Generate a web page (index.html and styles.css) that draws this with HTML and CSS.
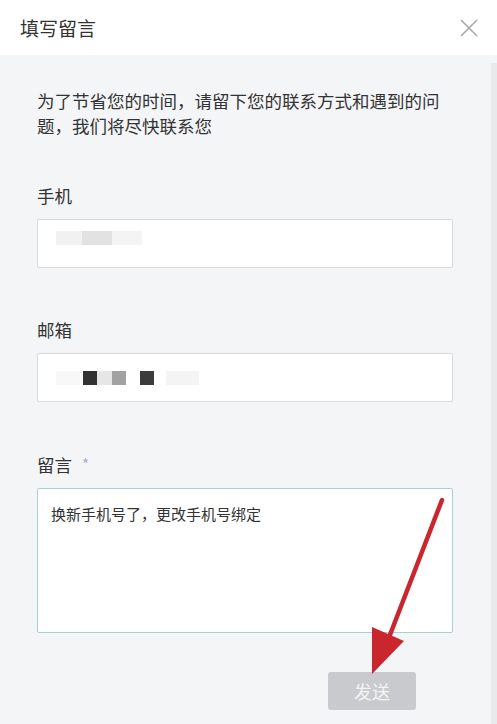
FILE: index.html
```html
<!DOCTYPE html>
<html lang="zh-CN">
<head>
<meta charset="utf-8">
<title>填写留言</title>
<link rel="stylesheet" href="styles.css">
</head>
<body>
<div class="page">
  <header class="header">
    <h1 class="title">填写留言</h1>
    <button class="close" aria-label="关闭">
      <svg width="18" height="18" viewBox="0 0 18 18"><path d="M1 1 L17 17 M17 1 L1 17" stroke="#a8a8a8" stroke-width="1.6" fill="none"/></svg>
    </button>
  </header>
  <div class="main">
    <div class="content">
      <p class="intro">为了节省您的时间，请留下您的联系方式和遇到的问题，我们将尽快联系您</p>
      <div class="field">
        <div class="label">手机</div>
        <div class="input input-phone">
          <span class="blk b-f0 w26"></span><span class="blk b-e0 w30"></span><span class="blk b-f4 w30"></span>
        </div>
      </div>
      <div class="field">
        <div class="label">邮箱</div>
        <div class="input input-mail">
          <span class="blk b-f6 w27"></span><span class="blk b-33 w14"></span><span class="blk b-e6 w15"></span><span class="blk b-a0 w14"></span><span class="blk b-fff w14"></span><span class="blk b-3a w14"></span><span class="blk b-fff w12"></span><span class="blk b-f4 w33"></span>
        </div>
      </div>
      <div class="field">
        <div class="label">留言 <span class="req">*</span></div>
        <div class="textarea">换新手机号了，更改手机号绑定</div>
      </div>
      <div class="actions">
        <button class="send">发送</button>
      </div>
    </div>
    <div class="scroll"></div>
  </div>
  <svg class="arrow" width="497" height="724" viewBox="0 0 497 724">
    <line x1="442" y1="500" x2="388" y2="640" stroke="#c9262d" stroke-width="4.5" stroke-linecap="round"/>
    <polygon points="372,627 404,641 372,674" fill="#c9262d"/>
  </svg>
</div>
</body>
</html>
```

FILE: styles.css
```css
* { box-sizing: border-box; }
html, body {
  margin: 0;
  padding: 0;
}
body {
  background: #f4f5f7;
  font-family: "Noto Sans CJK SC", "Noto Sans", sans-serif;
  color: #333;
}
.page {
  position: relative;
  width: 497px;
  height: 724px;
  overflow: hidden;
  display: flex;
  flex-direction: column;
}
.header {
  height: 55px;
  background: #fff;
  display: flex;
  align-items: center;
  justify-content: space-between;
  padding: 0 19px 0 20px;
  flex-shrink: 0;
}
.title {
  margin: 0;
  font-size: 19px;
  font-weight: 400;
  color: #333;
  line-height: 1;
}
.close {
  border: 0;
  background: transparent;
  padding: 0;
  width: 18px;
  height: 18px;
  display: flex;
}
.main {
  flex: 1;
  display: flex;
}
.content {
  flex: 1;
  padding: 33px 38px 0 37px;
}
.scroll {
  width: 6px;
  margin-top: 8px;
  background: #e9eaec;
}
.intro {
  margin: 0;
  font-size: 17.5px;
  line-height: 25px;
  color: #333;
}
.field {
  display: flex;
  flex-direction: column;
}
.label {
  font-size: 17.5px;
  line-height: 25px;
  color: #333;
  margin-bottom: 11px;
}
.field:nth-of-type(1) .label { margin-top: 45px; }
.field + .field .label { margin-top: 49px; }
.req {
  color: #9fb2c4;
  font-size: 15px;
  margin-left: 6px;
  vertical-align: 2px;
}
.input {
  height: 49px;
  background: #fff;
  border: 1px solid #dadbdd;
  border-radius: 2px;
  box-shadow: 0 0 1px rgba(0,0,0,0.06);
  display: flex;
  align-items: center;
  padding-left: 18px;
}
.input-phone { align-items: flex-start; padding-top: 11px; }
.blk {
  height: 14px;
  display: block;
}
.w12 { width: 12px; }
.w14 { width: 14px; }
.w15 { width: 15px; }
.w26 { width: 26px; }
.w27 { width: 27px; }
.w30 { width: 30px; }
.w33 { width: 33px; }
.b-f0 { background: #f1f1f1; }
.b-e0 { background: #e2e2e2; }
.b-f4 { background: #f4f4f4; }
.b-f6 { background: #f8f8f8; }
.b-33 { background: #323232; }
.b-e6 { background: #e6e6e6; }
.b-a0 { background: #a2a2a2; }
.b-fff { background: #fff; }
.b-3a { background: #3c3c3c; }
.textarea {
  height: 145px;
  background: #fff;
  border: 1px solid #a9cfd5;
  border-radius: 2px;
  padding: 13px 13px;
  font-size: 15px;
  line-height: 24px;
  color: #333;
}
.actions {
  display: flex;
  justify-content: flex-end;
  padding-right: 37px;
  margin-top: 39px;
}
.send {
  width: 88px;
  height: 38px;
  border: 0;
  border-radius: 3px;
  background: #c9cacd;
  color: #f4f4f5;
  font-family: "Noto Sans CJK SC", "Noto Sans", sans-serif;
  font-size: 18px;
  padding: 0;
}
.arrow {
  position: absolute;
  left: 0;
  top: 0;
  pointer-events: none;
}
```
